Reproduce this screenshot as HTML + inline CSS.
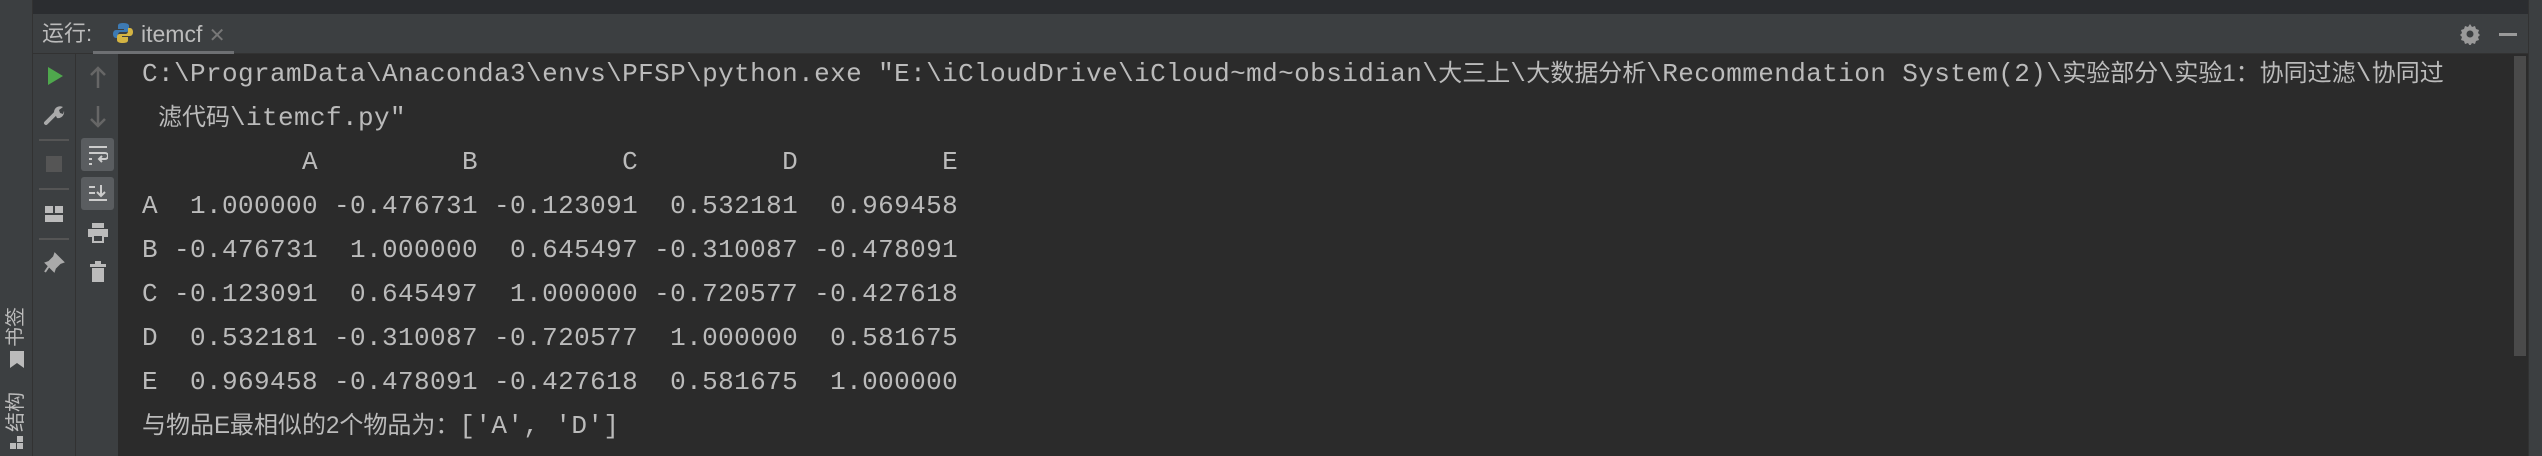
<!DOCTYPE html>
<html><head><meta charset="utf-8"><style>
html,body{margin:0;padding:0;width:2542px;height:456px;overflow:hidden;background:#2b2b2b;}
.abs{position:absolute}
.mono{font-family:"Liberation Mono","Noto Sans CJK SC",monospace;font-size:26px;letter-spacing:0.4px;color:#bbbbbb;white-space:pre;line-height:44px}
.cjk{font-family:"Liberation Sans","Noto Sans CJK SC",sans-serif;font-size:24px;letter-spacing:0}
</style></head><body>
<div class="abs" style="left:0;top:0;width:2542px;height:14px;background:#2b2d30"></div>
<div class="abs" style="left:0;top:0;width:32px;height:456px;background:#3c3f41;border-right:1px solid #323232"></div>
<div class="abs" style="left:33px;top:14px;width:2495px;height:39px;background:#3c3f41;border-bottom:1px solid #323232"></div>
<div class="abs" style="left:2528px;top:0;width:14px;height:456px;background:#3c3f41;border-left:1px solid #323232"></div>
<div class="abs" style="left:33px;top:54px;width:42px;height:402px;background:#3c3f41;border-right:1px solid #323232"></div>
<div class="abs" style="left:76px;top:54px;width:42px;height:402px;background:#3c3f41"></div>
<div class="abs" style="left:2514px;top:56px;width:12px;height:300px;background:#4a4a4a"></div>
<div class="abs cjk" style="left:42px;top:20px;font-size:22px;color:#bbbbbb;line-height:28px">运行:</div>
<svg class="abs" style="left:112px;top:22px" width="22" height="22" viewBox="0 0 22 22"><path d="M11 1c-5 0-5 2-5 3v3h6v1H4c-2 0-3 2-3 4s1 4 3 4h2v-3c0-2 1-3 3-3h5c2 0 3-1 3-3V4c0-2-2-3-6-3z" fill="#3d7ab3"/><path d="M11 21c5 0 5-2 5-3v-3h-6v-1h8c2 0 3-2 3-4s-1-4-3-4h-2v3c0 2-1 3-3 3H8c-2 0-3 1-3 3v3c0 2 2 3 6 3z" fill="#d4b443"/></svg>
<div class="abs" style="left:141px;top:20px;font-family:'Liberation Sans',sans-serif;font-size:23px;color:#bbbbbb;line-height:28px">itemcf <span style="color:#777;font-size:20px">✕</span></div>
<div class="abs" style="left:93px;top:51px;width:141px;height:3px;background:#6e7073"></div>
<svg class="abs" style="left:2459px;top:23px" width="22" height="22" viewBox="0 0 22 22"><path d="M11 1l2 3 3-1 1 3 3 1-1 3 2 2-2 2 1 3-3 1-1 3-3-1-2 3-2-3-3 1-1-3-3-1 1-3-2-2 2-2-1-3 3-1 1-3 3 1z" fill="#9a9a9a"/><circle cx="11" cy="11" r="3.5" fill="#3c3f41"/></svg>
<div class="abs" style="left:2499px;top:33px;width:18px;height:3px;background:#9a9a9a"></div>
<svg class="abs" style="left:46px;top:66px" width="18" height="20"><path d="M2 1L17 10L2 19Z" fill="#4fa84d"/></svg>
<svg class="abs" style="left:43px;top:104px" width="22" height="22" viewBox="0 0 22 22"><path d="M3 19L12 10" stroke="#aaa" stroke-width="4" stroke-linecap="round"/><path d="M11 8a6 6 0 0 1 9-5l-4 3 1 3 3 1 1-3a6 6 0 0 1-7 7z" fill="#aaa"/></svg>
<div class="abs" style="left:39px;top:139px;width:30px;height:2px;background:#555"></div>
<div class="abs" style="left:46px;top:156px;width:16px;height:16px;background:#555"></div>
<div class="abs" style="left:39px;top:188px;width:30px;height:2px;background:#555"></div>
<div class="abs" style="left:45px;top:206px;width:8px;height:7px;background:#bbb"></div>
<div class="abs" style="left:55px;top:206px;width:8px;height:7px;background:#bbb"></div>
<div class="abs" style="left:45px;top:215px;width:18px;height:7px;background:#bbb"></div>
<div class="abs" style="left:39px;top:238px;width:30px;height:2px;background:#555"></div>
<svg class="abs" style="left:43px;top:252px" width="22" height="22"><path d="M12 2l8 8-3 1-5 5-1 3-8-8 3-1 5-5z M6 14l-4 6" stroke="#aaa" stroke-width="2" fill="#aaa"/></svg>
<svg class="abs" style="left:88px;top:66px" width="20" height="24"><path d="M10 2v20M3 9l7-7 7 7" stroke="#666" stroke-width="2.5" fill="none"/></svg>
<svg class="abs" style="left:88px;top:104px" width="20" height="24"><path d="M10 2v20M3 15l7 7 7-7" stroke="#666" stroke-width="2.5" fill="none"/></svg>
<div class="abs" style="left:81px;top:138px;width:33px;height:33px;background:#5a5d60;border-radius:3px"></div>
<div class="abs" style="left:81px;top:177px;width:33px;height:33px;background:#5a5d60;border-radius:3px"></div>
<svg class="abs" style="left:88px;top:145px" width="20" height="20"><path d="M1 2h18M1 8h16a3 3 0 010 6h-5M14 11l-3 3 3 3M1 14h3M1 19h3" stroke="#ccc" stroke-width="2" fill="none"/></svg>
<svg class="abs" style="left:88px;top:184px" width="20" height="20"><path d="M1 3h6M1 9h6M1 16h18M13 1v11M9 8l4 4 4-4" stroke="#ccc" stroke-width="2" fill="none"/></svg>
<svg class="abs" style="left:87px;top:222px" width="22" height="22"><rect x="5" y="1" width="12" height="5" fill="#bbb"/><rect x="1" y="7" width="20" height="8" fill="#bbb"/><rect x="6" y="13" width="10" height="7" fill="#3c3f41" stroke="#bbb" stroke-width="2"/></svg>
<svg class="abs" style="left:90px;top:261px" width="16" height="22"><rect x="0" y="3" width="16" height="3" fill="#bbb"/><rect x="5" y="0" width="6" height="3" fill="#bbb"/><rect x="2" y="7" width="12" height="14" fill="#bbb"/></svg>
<div class="abs cjk" style="left:-6px;top:316px;width:44px;text-align:center;transform:rotate(-90deg);font-size:20px;line-height:22px;color:#bbb">书签</div>
<svg class="abs" style="left:10px;top:351px" width="14" height="17"><path d="M0 0h14v17l-7-5-7 5z" fill="#bbb"/></svg>
<div class="abs cjk" style="left:-6px;top:401px;width:44px;text-align:center;transform:rotate(-90deg);font-size:20px;line-height:22px;color:#bbb">结构</div>
<svg class="abs" style="left:10px;top:436px" width="14" height="14"><rect x="7" y="0" width="6" height="6" fill="#bbb"/><rect x="0" y="7" width="6" height="6" fill="#bbb"/><rect x="7" y="7" width="6" height="6" fill="#bbb"/></svg>
<div class="abs mono" style="left:142px;top:52px">C:\ProgramData\Anaconda3\envs\PFSP\python.exe "E:\iCloudDrive\iCloud~md~obsidian\<span class="cjk">大三上</span>\<span class="cjk">大数据分析</span>\Recommendation System(2)\<span class="cjk">实验部分</span>\<span class="cjk">实验1：协同过滤</span>\<span class="cjk">协同过</span>
 <span class="cjk">滤代码</span>\itemcf.py"
          A         B         C         D         E
A  1.000000 -0.476731 -0.123091  0.532181  0.969458
B -0.476731  1.000000  0.645497 -0.310087 -0.478091
C -0.123091  0.645497  1.000000 -0.720577 -0.427618
D  0.532181 -0.310087 -0.720577  1.000000  0.581675
E  0.969458 -0.478091 -0.427618  0.581675  1.000000
<span class="cjk">与物品E最相似的2个物品为：</span>['A', 'D']</div>
</body></html>
